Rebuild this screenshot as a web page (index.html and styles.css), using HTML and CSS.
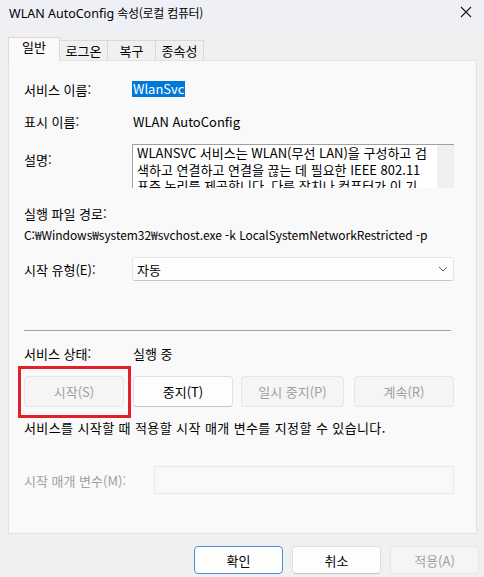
FILE: index.html
```html
<!DOCTYPE html>
<html lang="ko">
<head>
    <meta charset="UTF-8">
    <meta name="viewport" content="width=device-width, initial-scale=1.0">
    <title>WLAN AutoConfig 속성(로컬 컴퓨터)</title>
    <link rel="stylesheet" href="styles.css">
</head>
<body>
    <div class="titlebar">
        <span class="title">WLAN AutoConfig <span class="title-ko">속성(로컬 컴퓨터)</span></span>
        <svg class="close" width="12" height="12" viewBox="0 0 12 12">
            <path d="M1 1 L11 11 M11 1 L1 11" stroke="#1a1a1a" stroke-width="1.1" fill="none"/>
        </svg>
    </div>

    <div class="tabs">
        <div class="tab active">일반</div>
        <div class="tab">로그온</div>
        <div class="tab">복구</div>
        <div class="tab">종속성</div>
    </div>

    <div class="panel">
        <div class="row row-name">
            <span class="label">서비스 이름:</span>
            <span class="selected">WlanSvc</span>
        </div>
        <div class="row row-display">
            <span class="label">표시 이름:</span>
            <span>WLAN AutoConfig</span>
        </div>
        <div class="row row-desc">
            <span class="label desc-label">설명:</span>
            <div class="desc-box">
                <div class="desc-text">WLANSVC 서비스는 WLAN(무선 LAN)을 구성하고 검색하고 연결하고 연결을 끊는 데 필요한 IEEE 802.11 표준 논리를 제공합니다. 다른 장치나 컴퓨터가 이 기</div>
                <div class="desc-scroll"></div>
            </div>
        </div>
        <div class="row row-pathlabel">
            <span>실행 파일 경로:</span>
        </div>
        <div class="row row-path">
            <span>C:₩Windows₩system32₩svchost.exe -k LocalSystemNetworkRestricted -p</span>
        </div>
        <div class="row row-start">
            <span class="label">시작 유형(E):</span>
            <div class="select">
                <span>자동</span>
                <svg width="10" height="6" viewBox="0 0 10 6">
                    <path d="M1 1 L5 5 L9 1" stroke="#606060" stroke-width="1" fill="none"/>
                </svg>
            </div>
        </div>
        <div class="separator"></div>
        <div class="row row-status">
            <span class="label">서비스 상태:</span>
            <span>실행 중</span>
        </div>
        <div class="btn-row">
            <div class="btn-wrap">
                <button class="btn disabled">시작(S)</button>
                <div class="highlight"></div>
            </div>
            <button class="btn">중지(T)</button>
            <button class="btn disabled btn-pause">일시 중지(P)</button>
            <button class="btn disabled btn-resume">계속(R)</button>
        </div>
        <div class="row row-hint">
            <span>서비스를 시작할 때 적용할 시작 매개 변수를 지정할 수 있습니다.</span>
        </div>
        <div class="row row-params">
            <span class="label label-params">시작 매개 변수(M):</span>
            <div class="params-input"></div>
        </div>
    </div>

    <div class="footer">
        <button class="btn btn-footer default">확인</button>
        <button class="btn btn-footer">취소</button>
        <button class="btn btn-footer disabled">적용(A)</button>
    </div>
</body>
</html>
```

FILE: styles.css
```css
body {
    margin: 0;
    background: #f0f0f0;
    font-family: "Noto Sans CJK KR", sans-serif;
    font-size: 13px;
    color: #000;
    width: 484px;
    height: 577px;
    overflow: hidden;
}
.titlebar {
    height: 31px;
    background: #eff0f5;
    display: flex;
    align-items: center;
    justify-content: space-between;
    padding: 0 9px 0 9px;
}
.title {
    font-family: "Noto Sans", "Noto Sans CJK KR", sans-serif;
    font-size: 12.5px;
    margin-top: -6px;
}
.title-ko {
    font-family: "Noto Sans CJK KR", sans-serif;
    font-size: 12px;
    letter-spacing: -0.3px;
}
.close {
    margin-top: -7px;
    margin-right: 3px;
}
.tabs {
    display: flex;
    align-items: flex-end;
    margin: 6px 0 0 8px;
    height: 23px;
}
.tab {
    height: 20px;
    width: 48px;
    text-align: center;
    line-height: 20px;
    border: 1px solid #d9d9d9;
    border-bottom: none;
    border-left: none;
    background: #f0f0f0;
    box-sizing: border-box;
}
.tab.active {
    height: 24px;
    width: 52px;
    border-left: 1px solid #d9d9d9;
    background: #f9f9f9;
    line-height: 18px;
    margin-bottom: -1px;
    position: relative;
    z-index: 1;
}
.panel {
    margin: 0 7px 0 8px;
    height: 474px;
    box-sizing: border-box;
    background: #f9f9f9;
    border: 1px solid #e3e3e3;
    padding: 19px 22px 0 15px;
}
.row {
    display: flex;
    align-items: center;
    height: 18px;
    white-space: nowrap;
}
.label {
    width: 109px;
    flex-shrink: 0;
}
.selected {
    background: #0078d7;
    color: #fff;
    padding: 0 1px;
    line-height: 16px;
    margin-left: -1px;
}
.row-display {
    margin-top: 14px;
}
.row-desc {
    margin-top: 14px;
    height: 44px;
    align-items: flex-start;
    white-space: normal;
}
.desc-label {
    margin-top: 6px;
}
.desc-box {
    width: 322px;
    height: 44px;
    margin-left: -1px;
    box-sizing: border-box;
    border-top: 1px solid #a0a0a0;
    border-left: 1px solid #a0a0a0;
    background: #fff;
    display: flex;
    overflow: hidden;
}
.desc-text {
    flex: 1;
    padding: 0 8px 0 4px;
    line-height: 16.5px;
}
.desc-scroll {
    width: 17px;
    flex-shrink: 0;
    background: #f0f0f0;
}
.row-pathlabel {
    margin-top: 16px;
}
.row-path {
    margin-top: 3px;
    font-size: 12px;
    letter-spacing: -0.05px;
}
.row-start {
    margin-top: 14px;
    height: 24px;
}
.select {
    width: 323px;
    height: 24px;
    margin-left: -1px;
    box-sizing: border-box;
    border: 1px solid #e5e5e5;
    border-bottom: 1px solid #c8c8c8;
    border-radius: 3px;
    background: #fdfdfd;
    display: flex;
    align-items: center;
    justify-content: space-between;
    padding: 0 5px 0 4px;
}
.separator {
    margin-top: 49px;
    width: 427px;
    height: 1px;
    background: #a0a0a0;
}
.row-status {
    margin-top: 13px;
}
.btn-row {
    display: flex;
    margin-top: 14px;
    height: 31px;
}
.btn {
    font-family: inherit;
    font-size: 13px;
    height: 31px;
    width: 100px;
    background: #fdfdfd;
    border: 1px solid #e0e0e0;
    border-bottom-color: #c4c4c4;
    border-radius: 4px;
    color: #000;
    padding: 0;
}
.btn.disabled {
    background: #f5f5f5;
    border-color: #e5e5e5;
    color: #a0a0a0;
}
.btn-wrap {
    position: relative;
    margin-right: 9px;
}
.btn-pause {
    width: 103px;
    margin-left: 8px;
}
.btn-resume {
    margin-left: 10px;
}
.highlight {
    position: absolute;
    left: -6px;
    top: -10px;
    width: 113px;
    height: 52px;
    box-sizing: border-box;
    border: 3px solid #e3202a;
}
.row-hint {
    margin-top: 11px;
    letter-spacing: 0.4px;
}
.row-params {
    margin-top: 30px;
    height: 28px;
}
.label-params {
    width: 130px;
    color: #a0a0a0;
}
.params-input {
    width: 301px;
    height: 28px;
    box-sizing: border-box;
    border: 1px solid #e8e8e8;
    background: #f9f9f9;
}
.footer {
    display: flex;
    justify-content: flex-end;
    gap: 9px;
    margin-top: 12px;
    padding-right: 5px;
}
.btn-footer {
    width: 89px;
    height: 28px;
}
.btn-footer.default {
    border-color: #4a90d9;
    background: #fdfdfd;
}
```
